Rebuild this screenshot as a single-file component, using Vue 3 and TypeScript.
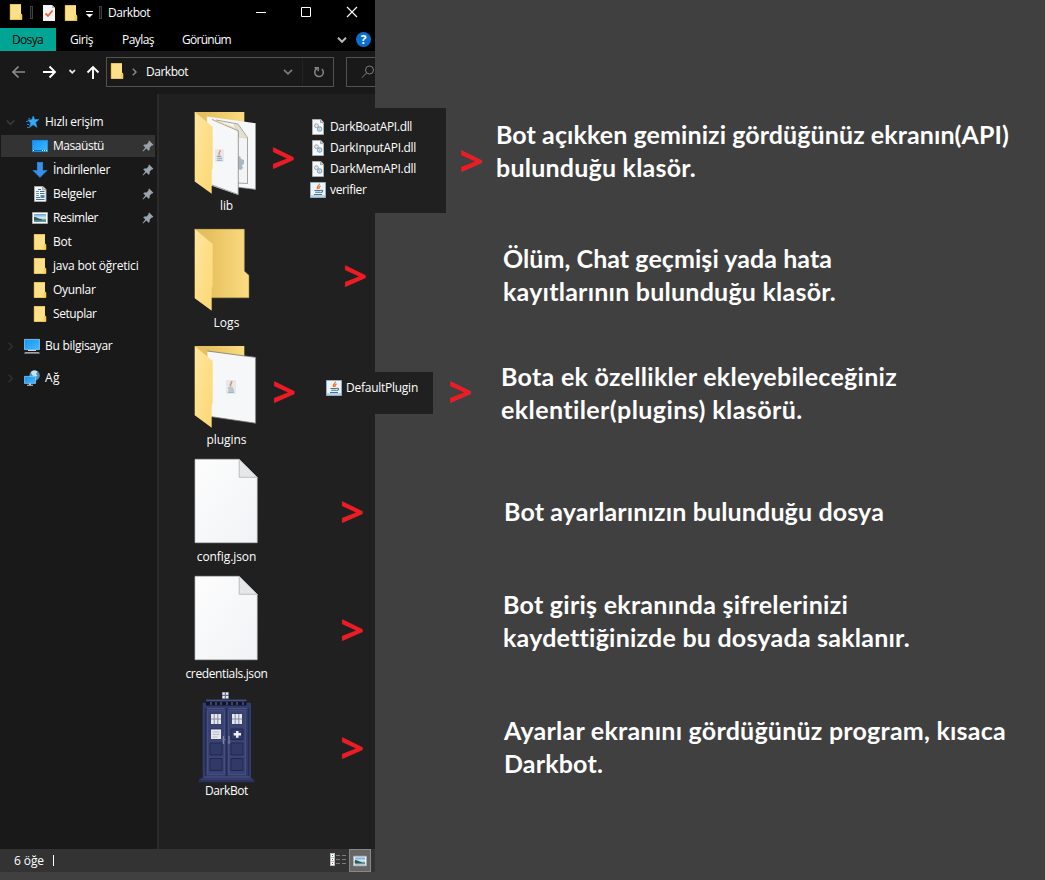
<script setup lang="ts">
import type { Directive } from 'vue'

interface NavItem {
  label: string
  icon: string
  width: number
  pinned?: boolean
  selected?: boolean
}
interface FileItem {
  label: string
  icon: string
  width: number
}
interface NoteLine {
  text: string
  width: number
}
interface Note {
  id: string
  lines: NoteLine[]
}

// Spreads the letters of a label so that it takes exactly the given width.
const fit = (el: HTMLElement, width: number) => {
  el.style.letterSpacing = '0px'
  const natural = el.getBoundingClientRect().width
  const count = (el.textContent ?? '').trim().length
  el.style.letterSpacing = `${(width - natural) / count}px`
}
const vFit: Directive<HTMLElement, number> = {
  mounted: (el, binding) => fit(el, binding.value),
}

const tabs = [
  { label: 'Giriş', width: 23, cls: 'tab-home' },
  { label: 'Paylaş', width: 32, cls: 'tab-share' },
  { label: 'Görünüm', width: 49, cls: 'tab-view' },
]

const quick: NavItem[] = [
  { label: 'Masaüstü', icon: 'desktop', width: 51, pinned: true, selected: true },
  { label: 'İndirilenler', icon: 'download', width: 57, pinned: true },
  { label: 'Belgeler', icon: 'document', width: 43, pinned: true },
  { label: 'Resimler', icon: 'picture', width: 45, pinned: true },
  { label: 'Bot', icon: 'folder', width: 18.5 },
  { label: 'java bot öğretici', icon: 'folder', width: 85.5 },
  { label: 'Oyunlar', icon: 'folder', width: 42.5 },
  { label: 'Setuplar', icon: 'folder', width: 43.5 },
]

const files: FileItem[] = [
  { label: 'lib', icon: 'big-lib', width: 13 },
  { label: 'Logs', icon: 'big-logs', width: 26 },
  { label: 'plugins', icon: 'big-plugins', width: 40 },
  { label: 'config.json', icon: 'big-file', width: 59.5 },
  { label: 'credentials.json', icon: 'big-file', width: 82 },
  { label: 'DarkBot', icon: 'big-box', width: 43 },
]

const libFiles: FileItem[] = [
  { label: 'DarkBoatAPI.dll', icon: 'dll', width: 82 },
  { label: 'DarkInputAPI.dll', icon: 'dll', width: 86 },
  { label: 'DarkMemAPI.dll', icon: 'dll', width: 86 },
  { label: 'verifier', icon: 'java', width: 36.5 },
]

const arrows = ['a1', 'a2', 'a3', 'a4', 'a5', 'a6', 'a7', 'a8']

const notes: Note[] = [
  { id: 'n1', lines: [
    { text: 'Bot açıkken geminizi gördüğünüz ekranın(API)', width: 513 },
    { text: 'bulunduğu klasör.', width: 200 },
  ] },
  { id: 'n2', lines: [
    { text: 'Ölüm, Chat geçmişi yada hata', width: 329 },
    { text: 'kayıtlarının bulunduğu klasör.', width: 333 },
  ] },
  { id: 'n3', lines: [
    { text: 'Bota ek özellikler ekleyebileceğiniz', width: 396 },
    { text: 'eklentiler(plugins) klasörü.', width: 302 },
  ] },
  { id: 'n4', lines: [{ text: 'Bot ayarlarınızın bulunduğu dosya', width: 380 }] },
  { id: 'n5', lines: [
    { text: 'Bot giriş ekranında şifrelerinizi', width: 345 },
    { text: 'kaydettiğinizde bu dosyada saklanır.', width: 406 },
  ] },
  { id: 'n6', lines: [
    { text: 'Ayarlar ekranını gördüğünüz program, kısaca', width: 502 },
    { text: 'Darkbot.', width: 99 },
  ] },
]
</script>

<template>
  <main class="canvas">
    <svg class="sprite" width="0" height="0">
      <defs>
        <linearGradient id="gFlap" x1="0" y1="0" x2="1" y2="1">
          <stop offset="0" stop-color="#ffe69f" /><stop offset="1" stop-color="#fbd873" />
        </linearGradient>
        <linearGradient id="gBack" x1="0" y1="0" x2="1" y2="0">
          <stop offset="0.25" stop-color="#e6c05e" /><stop offset="1" stop-color="#fbdc81" />
        </linearGradient>
        <linearGradient id="gPage" x1="0" y1="0" x2="1" y2="1">
          <stop offset="0" stop-color="#fdfdfd" /><stop offset="1" stop-color="#f1f3f6" />
        </linearGradient>
        <linearGradient id="gBlue" x1="0" y1="0" x2="1" y2="1">
          <stop offset="0" stop-color="#1592f5" /><stop offset="1" stop-color="#3fbcff" />
        </linearGradient>
        <linearGradient id="gSky" x1="0" y1="0" x2="0" y2="1">
          <stop offset="0" stop-color="#5f9fe6" /><stop offset=".5" stop-color="#e4f1f8" />
          <stop offset=".75" stop-color="#5d8f86" /><stop offset="1" stop-color="#5a90bf" />
        </linearGradient>
      </defs>

      <symbol id="folder" viewBox="0 0 16 16">
        <path d="M2 .3h11v9.2l1 .8v5.4H2z" fill="#ffe08a" />
        <path d="M2.3.5v15h11.4M2 .5h11M12.2 15.2v-4.5h1.6v4.8" fill="none" stroke="#edc44b" stroke-width=".9" />
      </symbol>

      <symbol id="desktop" viewBox="0 0 16 16">
        <path d="M0 2h16v12H0z" fill="url(#gBlue)" />
        <path d="M.4 2.4h15.2v11.2H.4z" fill="none" stroke="#1682d8" stroke-width=".8" />
        <path d="M1 12h14v1H1z" fill="#0a6cc4" />
        <path d="M1 12h1v1H1zM10 12h1v1h-1zM12 12h1v1h-1zM14 12h1v1h-1z" fill="#fff" />
      </symbol>

      <symbol id="download" viewBox="0 0 16 16">
        <path d="M5 0h6v8.2h4.6L8 15.8.4 8.2H5z" fill="#3990e6" />
        <path d="M5.4.4h5.2v8.2h4L8 15.2 1.4 8.6h4z" fill="none" stroke="#2377cf" stroke-width=".7" />
      </symbol>

      <symbol id="document" viewBox="0 0 16 16">
        <path d="M2.5.5H11l3 3v12H2.5z" fill="#f4f6f8" stroke="#a9adb2" stroke-width=".9" />
        <path d="M10.6.6v3.2H14" fill="#ccd2d8" stroke="#8a8f95" stroke-width=".8" />
        <path d="M4 5.5h3M4 7.5h3M4 9.5h3" stroke="#6d90ac" />
        <path d="M6 3.5h3M8 5.5h4.5M8 7.5h4.5M4 11.5h4M4 13.5h8.5" stroke="#35739e" />
        <path d="M8.5 9h4v3h-4z" fill="#4f87b5" />
      </symbol>

      <symbol id="picture" viewBox="0 0 16 16">
        <path d="M.5 2.500h15v11H.5z" fill="#fff" stroke="#a9a9a9" />
        <path d="M2 4h12v8H2z" fill="url(#gSky)" />
        <path d="M2 7c2.500-.4 4 1.700 8 2.300v.9H2z" fill="#2c5c50" />
      </symbol>

      <symbol id="star" viewBox="0 0 16 16">
        <path d="M9.300 2l1.300 3.600 4.300-.1-3.300 2.900 1.400 4.900-3.900-2.600-3.600 2.900 1.200-4.700-3-2.900 3.900-.3z" fill="#35abf6" stroke="#1d93e6" stroke-width=".7" />
        <path d="M2 7.500h2M3 10.500h2M4.500 4.500H6M3 13.500h2" stroke="#1e7fc8" />
      </symbol>

      <symbol id="pc" viewBox="0 0 16 16">
        <path d="M.4 1.400h15.200v10.200H.4z" fill="url(#gBlue)" stroke="#9dccec" stroke-width=".8" />
        <path d="M6 12h4v1H6z" fill="#9fb3c2" />
        <path d="M4 12.500h8" stroke="#c9d8e2" />
        <path d="M1 14.200h14l1 1.300H0z" fill="#c3d2dc" />
      </symbol>

      <symbol id="net" viewBox="0 0 16 16">
        <circle cx="10.600" cy="5.400" r="5.200" fill="#4f92b5" />
        <path d="M7 2c2-2 5-1.700 6.500-.4L12 4l1.500 2-3 .6L8 5z" fill="#c4e5ee" />
        <path d="M.4 6.400h11.200v7H.4z" fill="url(#gBlue)" stroke="#9fd3f2" stroke-width=".7" />
        <path d="M5 13.500h2v1.300H5zM3 14.700h6v1H3z" fill="#bfcfda" />
      </symbol>

      <symbol id="pin" viewBox="0 0 12 12">
        <path d="M7.200.6l4.200 4.200-1 .8-.7-.1-2 2.200-.1 2.200-1 .8-2.200-2.200L1 11.400l-.5-.4 2.800-3.500-2-2 .9-1 2.200.1 2.100-2.200-.1-.8z" fill="#98a3ad" />
      </symbol>

      <symbol id="dll" viewBox="0 0 16 16">
        <path d="M2.500.5h8.300l2.700 2.700v12.300h-11z" fill="#f7f8f9" stroke="#aeb2b6" stroke-width=".9" />
        <path d="M10.500.6v3h3" fill="#ccd0d4" stroke="#8d9196" stroke-width=".8" />
        <circle cx="6.400" cy="6.700" r="1.900" fill="#e7eaec" stroke="#9aa4ab" stroke-width="1" />
        <circle cx="9.600" cy="10" r="2.100" fill="#e4eef6" stroke="#8babc4" stroke-width="1.100" />
        <circle cx="9.600" cy="10" r=".6" fill="#7595b0" />
      </symbol>

      <symbol id="java" viewBox="0 0 16 16">
        <path d="M.5.5h15v15H.5z" fill="#eef3f7" stroke="#8fb0c9" />
        <path d="M1 13h14v2H1z" fill="#bdd1e0" />
        <path d="M9.300 1.600c1 1.700-3.500 2.700-1.600 5.400M10.600 4c-2 .9-2 1.800-1.500 3" fill="none" stroke="#ee7623" stroke-width="1.300" />
        <path d="M4.500 8.500h6.300M5.200 10.300h5M4 12.500h8M10.800 8.300c2.700-.6 2.300 2-.3 2.300" fill="none" stroke="#42739a" stroke-width="1.100" />
      </symbol>

      <symbol id="java-mini" viewBox="0 0 10 14">
        <path d="M0 0h10v14H0z" fill="#e6e9ec" />
        <path d="M5.400 1c1.200 2-2.200 2.500-.6 5.500" fill="none" stroke="#e59468" stroke-width="1.700" />
        <path d="M2 8h5M2.500 10h5.500M2 12.200h6" stroke="#8fa3b6" stroke-width="1.200" />
      </symbol>

      <symbol id="big-lib" viewBox="0 0 101 99">
        <path d="M18.700 13h49.600v70H30z" fill="url(#gBack)" />
        <path d="M30.700 17.500l49 6.800v66.200l-20-2.500z" fill="#f6f7f8" />
        <path d="M79.500 24.500v65.800l-17-2" fill="none" stroke="#8b8b88" stroke-width=".7" />
        <path d="M40 21l22 4 9.500 13.500v46l-10-.5" fill="#f3f4f5" stroke="#84817a" stroke-width=".7" />
        <path d="M58 25l3.500 1 9.500 13-8-1z" fill="#dfe0e1" stroke="#e5cf87" stroke-width=".7" />
        <path d="M62 58l2-1 1 3 3 1v4l-2 1 1 3-2 2-3-1z" fill="#aab7bf" />
        <path d="M30.700 18.500l31.600 13V96L35 86.500z" fill="#f6f7f8" />
        <path d="M36 20.500L62.300 31.800V95.600L36 86" fill="none" stroke="#77766e" stroke-width=".7" />
        <path d="M37 20.700l25 10" stroke="#e9cd7b" stroke-width=".8" />
        <use href="#java-mini" x="39" y="50" width="9" height="13" />
        <path d="M18.700 13l18 14.700v41.600l-1 1.700v23.700L18.700 82.500z" fill="url(#gFlap)" />
      </symbol>

      <symbol id="big-logs" viewBox="0 0 101 99">
        <path d="M18.700 13h49.600v42l4.700 4.300v22.400H34z" fill="url(#gBack)" />
        <path d="M18.700 13.300h49.600v42l4.500 4.200v22.200H36" fill="none" stroke="#b59a55" stroke-width=".6" />
        <path d="M18.700 13l18 15v42l-1 2v22.700L18.700 82.300z" fill="url(#gFlap)" />
      </symbol>

      <symbol id="big-plugins" viewBox="0 0 101 99">
        <path d="M18.700 13h49.600v15H30z" fill="url(#gBack)" />
        <path d="M31.300 18l48.400 6.300v66L34 83.500z" fill="#f6f7f8" />
        <path d="M31.300 18l48.300 6.400v65.800L36 83.800" fill="none" stroke="#77766f" stroke-width=".8" />
        <use href="#java-mini" x="50" y="47" width="10" height="14" />
        <path d="M18.700 13l18 15v42l-1 2v22.700L18.700 82.300z" fill="url(#gFlap)" />
      </symbol>

      <symbol id="big-file" viewBox="0 0 101 99">
        <path d="M19 9.300h44.200l18 18v65.400H19z" fill="url(#gPage)" stroke="#bdbdbd" stroke-width=".7" />
        <path d="M63.200 9.300v18h18z" fill="#e6e7e9" stroke="#a8a9ab" stroke-width=".7" />
      </symbol>

      <symbol id="big-box" viewBox="0 0 101 99">
        <path d="M46 8h6.700v7H46z" fill="#6b6d8c" />
        <path d="M46.500 8.500h2.300v2.300h-2.300zM50 8.500h2.300v2.300H50zM46.500 12h2.300v2.300h-2.300zM50 12h2.300v2.300H50z" fill="#eceef5" />
        <path d="M30 15.300h40.500v3.500H75v75.500H26.700V18.800H30z" fill="#333c6a" />
        <path d="M30.500 16h39.500v1.500H30.500z" fill="#485080" />
        <path d="M30 17.500h40.500v4H30z" fill="#11132a" />
        <path d="M34 18h2v3h-2zM39 18h2v3h-2zM44 18h2v3h-2zM50 18h2v3h-2zM55 18h2v3h-2zM60 18h2v3h-2zM66 18h2v3h-2z" fill="#41445f" />
        <path d="M29.500 24v69M72.500 24v69M50.500 24v69" stroke="#242c57" stroke-width="1.400" />
        <path d="M28 93h46M31 24.500h17.500M52.500 24.500H71" stroke="#4b5386" />
        <path d="M31.500 26.500h17v64h-17zM52.500 26.500h17v64h-17z" fill="#3a4373" stroke="#4a5282" stroke-width=".8" />
        <path d="M34.500 29.500h11v11h-11zM55.500 29.500h11v11h-11zM34.500 45h11v10.500h-11z" fill="#e6e8ef" stroke="#242b52" stroke-width=".8" />
        <path d="M38.200 30v10M41.800 30v10M35 35h10M59.200 30v10M62.800 30v10M56 35h10" stroke="#7f85a3" stroke-width=".9" />
        <path d="M36.500 48h7M36.500 50.500h7M36.500 53h5" stroke="#aaafba" stroke-width=".8" />
        <g fill="#313a66" stroke="#20284f">
          <path d="M55 45h12v10.500H55zM34 59h12v12H34zM55 59h12v12H55zM34 74.500h12v12H34zM55 74.500h12v12H55z" />
        </g>
        <path d="M60 47h2.500v2H65v2.500h-2.500v2.200H60v-2.200h-2.300V49H60z" fill="#eef0f7" />
        <path d="M47.500 52v8M53 52v8" stroke="#7f85a6" stroke-width="1.200" />
        <path d="M46 55.500h4M51.500 58h3" stroke="#6a7095" />
        <path d="M23.500 94.500h54l1 3.800h-56z" fill="#29315f" />
        <path d="M25 95h51" stroke="#434b7d" />
      </symbol>
    </svg>

    <section class="window">
      <header class="titlebar">
        <svg class="tb-folder" width="16" height="16"><use href="#folder" /></svg>
        <i class="sep sep-first"></i>
        <svg class="tb-check" width="12" height="16" viewBox="0 0 12 16">
          <path d="M0 0h9l3 3v13H0z" fill="#f3f3f5" /><path d="M9 0v3h3z" fill="#b9bcc0" />
          <path d="M2.500 8.500L5 11l4.500-5.500" fill="none" stroke="#e8642c" stroke-width="1.800" />
        </svg>
        <svg class="tb-folder2" width="16" height="16"><use href="#folder" /></svg>
        <svg class="tb-caret" width="7" height="7" viewBox="0 0 7 7">
          <path d="M0 .5h7" stroke="#fff" /><path d="M0 3h7L3.500 6.500z" fill="#fff" />
        </svg>
        <i class="sep sep-second"></i>
        <span v-fit="42" class="title">Darkbot</span>
        <svg class="controls" width="102" height="12" viewBox="0 0 102 12" fill="none" stroke="#fff">
          <path d="M0 6.500h10" /><path d="M45.500 1.500h9v9h-9z" /><path d="M91 1l10 10M101 1L91 11" stroke-width="1.100" />
        </svg>
      </header>

      <nav class="ribbon">
        <div class="tab-file"><span v-fit="31">Dosya</span></div>
        <span v-for="t in tabs" :key="t.label" v-fit="t.width" :class="t.cls">{{ t.label }}</span>
        <svg class="chev" width="10" height="6" viewBox="0 0 10 6"><path d="M1 .8l4 4 4-4" fill="none" stroke="#b9b9b9" stroke-width="2" /></svg>
        <span class="help">?</span>
      </nav>

      <div class="addressbar">
        <svg class="arrows" width="88" height="14" viewBox="0 0 88 14" fill="none">
          <path d="M1 7h12M6.500 1.500L1 7l5.500 5.500" stroke="#8b8b8b" stroke-width="1.700" />
          <path d="M43 7H31M37.500 1.500L43 7l-5.500 5.500" stroke="#fff" stroke-width="1.900" />
          <path d="M57.500 5l2.800 2.800L63 5" stroke="#e8e8e8" stroke-width="1.800" />
          <path d="M81 14V2M75.500 7.500L81 2l5.500 5.500" stroke="#fff" stroke-width="1.900" />
        </svg>
        <div class="path">
          <svg class="path-folder" width="16" height="16"><use href="#folder" /></svg>
          <svg class="path-sep" width="5" height="8" viewBox="0 0 5 8"><path d="M.8.8L4 4 .8 7.200" fill="none" stroke="#8b8b8b" stroke-width="1.400" /></svg>
          <span v-fit="42">Darkbot</span>
          <svg class="path-chev" width="10" height="6" viewBox="0 0 10 6"><path d="M1 .8l4 4 4-4" fill="none" stroke="#7c7c7c" stroke-width="1.700" /></svg>
          <i class="path-line"></i>
          <svg class="reload" width="12" height="12" viewBox="0 0 12 12"><path d="M8.800 3A4.300 4.300 0 1 1 4 2.500M1.500 1.700h3.700v3.500" fill="none" stroke="#858585" stroke-width="1.500" /></svg>
        </div>
        <div class="search">
          <svg width="14" height="14" viewBox="0 0 14 14" fill="none" stroke="#7d7d7d"><circle cx="8.500" cy="5" r="4" /><path d="M5.500 8L.8 12.800" /></svg>
        </div>
      </div>

      <div class="body">
        <aside class="sidebar">
          <div class="nav root">
            <svg class="exp" width="9" height="9" viewBox="0 0 9 9"><path d="M.7 2.500l3.800 3.800 3.800-3.800" fill="none" stroke="#3d3d3d" stroke-width="1.400" /></svg>
            <svg class="ico" width="16" height="16"><use href="#star" /></svg>
            <span v-fit="58.5">Hızlı erişim</span>
          </div>
          <div v-for="n in quick" :key="n.label" class="nav child" :class="{ selected: n.selected }">
            <svg class="ico" width="16" height="16"><use :href="'#' + n.icon" /></svg>
            <span v-fit="n.width">{{ n.label }}</span>
            <svg v-if="n.pinned" class="pin" width="12" height="12"><use href="#pin" /></svg>
          </div>
          <div class="nav root spaced">
            <svg class="exp" width="9" height="9" viewBox="0 0 9 9"><path d="M2.500.7l3.800 3.800-3.800 3.800" fill="none" stroke="#303030" stroke-width="1.400" /></svg>
            <svg class="ico" width="16" height="16"><use href="#pc" /></svg>
            <span v-fit="67.5">Bu bilgisayar</span>
          </div>
          <div class="nav root spaced">
            <svg class="exp" width="9" height="9" viewBox="0 0 9 9"><path d="M2.500.7l3.800 3.800-3.800 3.800" fill="none" stroke="#303030" stroke-width="1.400" /></svg>
            <svg class="ico" width="16" height="16"><use href="#net" /></svg>
            <span v-fit="15">Ağ</span>
          </div>
        </aside>
        <div class="files">
          <div v-for="f in files" :key="f.label" class="file">
            <svg width="101" height="99"><use :href="'#' + f.icon" /></svg>
            <span v-fit="f.width">{{ f.label }}</span>
          </div>
        </div>
      </div>

      <footer class="status">
        <span v-fit="30">6 öğe</span>
        <i class="bar"></i>
        <svg class="details" width="16" height="13" viewBox="0 0 16 13">
          <path d="M0 0h5v13H0z" fill="#b9b9b9" /><path d="M1 1h3v3H1zM1 5h3v3H1zM1 9h3v3H1z" fill="#fff" />
          <path d="M2 2h1v1H2zM2 6h1v1H2z" fill="#3b6ea5" /><path d="M2 10h1v1H2z" fill="#c33" />
          <path d="M6 2.500h4M12 2.500h4M6 6.500h4M12 6.500h4M6 10.500h4M12 10.500h4" stroke="#7b7b7b" />
        </svg>
        <div class="thumbs"><svg width="14" height="14"><use href="#picture" /></svg></div>
      </footer>
    </section>

    <div class="snippet lib-snippet">
      <div v-for="f in libFiles" :key="f.label" class="row">
        <svg width="16" height="16"><use :href="'#' + f.icon" /></svg>
        <span v-fit="f.width">{{ f.label }}</span>
      </div>
    </div>
    <div class="snippet plugin-snippet">
      <div class="row">
        <svg width="16" height="16"><use href="#java" /></svg>
        <span v-fit="72">DefaultPlugin</span>
      </div>
    </div>

    <b v-for="a in arrows" :key="a" class="arrow" :class="a">&gt;</b>

    <section class="notes">
      <p v-for="n in notes" :key="n.id" :class="n.id">
        <template v-for="l in n.lines" :key="l.text"><span v-fit="l.width">{{ l.text }}</span></template>
      </p>
    </section>
  </main>
</template>

<style>
body { margin: 0; background: #404040; }
</style>

<style scoped>
.canvas {
  position: relative;
  display: flex;
  width: 1045px;
  height: 880px;
  overflow: hidden;
  background: #404040;
  color: #fff;
  font: 12px/16px "Open Sans", "Noto Sans", sans-serif;
}
.canvas span { white-space: pre; flex: none; }
svg { display: block; flex: none; }
.sprite { position: absolute; }

.window { width: 375px; height: 872px; flex: none; display: flex; flex-direction: column; overflow: hidden; background: #191919; }
.titlebar { height: 28px; flex: none; display: flex; align-items: flex-start; background: #000; }
.tb-folder { margin: 4px 0 0 8px; }
.tb-folder2 { margin: 5px 0 0 8px; }
.tb-check { margin: 5px 0 0 10px; }
.tb-caret { margin: 11px 0 0 7px; }
.sep { width: 1px; height: 11px; margin-top: 6px; border: 1px solid #404040; background: #111; }
.sep-first { margin-left: 6px; }
.sep-second { margin-left: 6px; }
.title { margin: 5px 0 0 6px; }
.controls { margin: 6px 0 0 auto; padding-right: 17px; }

.ribbon { height: 23px; flex: none; display: flex; align-items: center; background: #000; }
.tab-file { width: 56px; height: 23px; display: flex; align-items: center; padding-left: 12px; box-sizing: border-box; background: #00a693; color: #000; }
.tab-home { margin-left: 14px; }
.tab-share { margin-left: 29px; }
.tab-view { margin-left: 28px; }
.chev { margin-left: auto; }
.help { width: 15px; height: 15px; margin: 0 4px 0 9px; border-radius: 50%; background: #0b6fd0; font-size: 12px; line-height: 15px; font-weight: 700; text-align: center; }

.addressbar { height: 43px; flex: none; display: flex; align-items: flex-start; }
.arrows { margin: 14px 0 0 12px; }
.path { width: 228px; height: 30px; flex: none; box-sizing: border-box; margin: 6px 0 0 6px; border: 1px solid #535353; display: flex; align-items: center; }
.path-folder { margin: -2px 0 0 2px; }
.path-sep { margin: 0 9px 0 7px; }
.path-chev { margin-left: auto; }
.path-line { width: 1px; height: 28px; margin-left: 9px; background: #222; }
.reload { margin: 0 8px 0 10px; }
.search { width: 40px; height: 30px; box-sizing: border-box; margin: 6px 0 0 12px; border: 1px solid #535353; padding: 7px 0 0 14px; flex: none; }

.body { height: 755px; flex: none; display: flex; }
.sidebar { width: 159px; height: 755px; flex: none; display: flex; flex-direction: column; box-sizing: border-box; padding-top: 16px; border-right: 2px solid #2a2a2a; }
.nav { height: 24px; flex: none; display: flex; align-items: center; }
.root { padding-left: 6px; }
.root .exp { margin-right: 9px; }
.root .ico { margin-right: 5px; }
.child { height: 22px; margin: 1px 2px 1px 1px; padding-left: 31px; }
.child .ico { margin-right: 5px; }
.pin { margin: 0 1px 0 auto; }
.selected { background: #333; }
.spaced { margin-top: 8px; }
.files { flex: 1; padding: 5px 0 0 17px; background: #202020; }
.file { width: 101px; height: 117px; display: flex; flex-direction: column; align-items: center; }

.status { height: 23px; flex: none; display: flex; align-items: center; background: #333; padding-left: 14px; }
.bar { width: 1px; height: 11px; margin-left: 9px; background: #fff; }
.details { margin: -2px 3px 0 auto; }
.thumbs { width: 22px; height: 23px; box-sizing: border-box; margin-right: 4px; border: 1px solid #888; background: #666; display: flex; align-items: center; justify-content: center; }

.snippet { position: absolute; background: #202020; box-sizing: border-box; }
.lib-snippet { left: 300px; top: 108px; width: 146px; height: 105px; padding: 8px 0 0 10px; }
.plugin-snippet { left: 316px; top: 372px; width: 117px; height: 42px; padding: 5px 0 0 10px; }
.row { height: 21px; display: flex; align-items: center; gap: 4px; }

.arrow { position: absolute; width: 40px; height: 40px; text-align: center; color: #ed1c24; font-size: 42px; line-height: 40px; font-weight: 700; }
.a1 { left: 263px; top: 137px; }
.a2 { left: 451px; top: 140px; }
.a3 { left: 335px; top: 255px; }
.a4 { left: 264px; top: 371px; }
.a5 { left: 440px; top: 371px; }
.a6 { left: 332px; top: 491px; }
.a7 { left: 332px; top: 609px; }
.a8 { left: 332px; top: 727px; }

.notes { width: 670px; font: 700 25px/33px Lato, "Open Sans", sans-serif; }
.notes p { margin: 0; display: flex; flex-direction: column; align-items: flex-start; }
.notes .n1 { margin: 118px 0 0 121px; }
.notes .n2 { margin: 58px 0 0 128px; }
.notes .n3 { margin: 52px 0 0 126px; }
.notes .n4 { margin: 69px 0 0 129px; }
.notes .n5 { margin: 60px 0 0 128px; }
.notes .n6 { margin: 60px 0 0 129px; }
</style>
